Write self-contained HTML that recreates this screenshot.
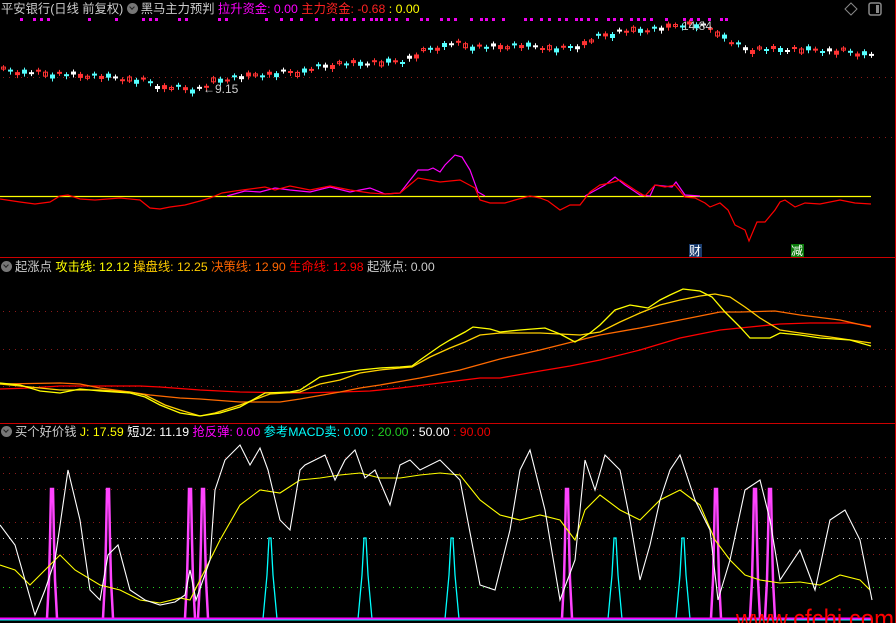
<!DOCTYPE html>
<html><head><meta charset="utf-8"><style>
html,body{margin:0;padding:0;background:#000;width:896px;height:623px;overflow:hidden}
svg{position:absolute;left:0;top:0}
.t{position:absolute;font:12.3px "Liberation Sans","Noto Sans CJK SC",sans-serif;white-space:nowrap;line-height:16px}
.ic{display:inline-block;width:11px;height:11px;border-radius:50%;background:#777;vertical-align:-1px;margin-right:3px;position:relative}
.ic:after{content:"";position:absolute;left:3px;top:2px;width:3px;height:3px;border-right:1.5px solid #222;border-bottom:1.5px solid #222;transform:rotate(45deg)}
</style></head><body>
<svg width="896" height="623" viewBox="0 0 896 623" id="s">
<g stroke="#8b1a1a" stroke-dasharray="1,5" stroke-width="1">
<line x1="3" y1="77.5" x2="893" y2="77.5"/><line x1="3" y1="137.5" x2="893" y2="137.5"/>
<line x1="3" y1="311.5" x2="893" y2="311.5"/><line x1="3" y1="349.5" x2="893" y2="349.5"/><line x1="3" y1="386.5" x2="893" y2="386.5"/>
<line x1="3" y1="457.5" x2="893" y2="457.5"/><line x1="3" y1="473.5" x2="893" y2="473.5"/><line x1="3" y1="489.5" x2="893" y2="489.5"/><line x1="3" y1="522.5" x2="893" y2="522.5"/><line x1="3" y1="554.5" x2="893" y2="554.5"/>
</g>
<line x1="3" y1="538.5" x2="893" y2="538.5" stroke="#ccc" stroke-dasharray="1,5"/>
<line x1="3" y1="587.5" x2="893" y2="587.5" stroke="#2c2" stroke-dasharray="1,5"/>
<line x1="0" y1="257.5" x2="896" y2="257.5" stroke="#c00"/>
<line x1="0" y1="423.5" x2="896" y2="423.5" stroke="#c00"/>
<line x1="895.5" y1="0" x2="895.5" y2="623" stroke="#c00"/>
<g id="dots" fill="#e0e"></g>
<g id="cand"></g>
<line x1="0" y1="196.5" x2="871" y2="196.5" stroke="#ff0" stroke-width="1.3"/>
<polyline fill="none" stroke="#f0f" stroke-width="1.2" points="227,196 245,191 260,192 275,188 290,190 310,192 330,187 350,192 370,188 385,194 400,193 418,170 428,170 433,168 440,172 445,165 455,155 462,157 470,170 478,192 485,196"/>
<polyline fill="none" stroke="#f0f" stroke-width="1.2" points="585,196 605,185 615,177 625,185 640,195 650,196 655,185 672,187 676,182 685,195 700,196"/>
<polyline fill="none" stroke="#f00" stroke-width="1.2" points="0,199 20,202 35,204 50,202 60,196 68,195 80,199 95,200 120,198 140,200 150,208 160,209 170,207 185,205 200,201 210,198 222,193 235,191 250,189 265,187 275,190 290,186 310,190 330,186 350,190 370,193 385,194 400,193 418,178 440,182 460,180 475,188 480,200 490,203 505,203 515,200 530,196 540,198 548,201 560,210 570,205 580,205 590,192 600,185 610,183 620,180 635,190 645,196 655,185 665,187 675,185 685,197 695,198 705,203 710,207 720,203 728,210 735,225 745,230 749,241 757,222 765,222 775,210 780,202 785,200 795,207 805,203 820,204 840,200 855,203 871,204"/>
<rect x="689" y="244" width="13" height="13" fill="#1a3c6e"/><text x="689" y="255" fill="#fff" font-size="12" font-family="Noto Sans CJK SC,sans-serif">财</text>
<rect x="791" y="244" width="13" height="13" fill="#0a7a0a"/><text x="791" y="255" fill="#fff" font-size="12" font-family="Noto Sans CJK SC,sans-serif">减</text>
<g fill="none" stroke-width="1.3">
<polyline stroke="#f00" points="0,389 30,388 60,386 100,386 140,386 160,387 200,390 240,392 300,393 340,392 370,391 400,388 440,383 480,378 500,378 540,371 570,366 600,360 640,350 680,338 720,330 750,327 780,324 810,323 850,323 871,326"/>
<polyline stroke="#ff6a00" points="0,384 60,383 80,384 100,388 130,392 150,395 180,398 200,399 240,402 280,402 300,399 340,392 360,388 380,385 420,378 460,370 500,359 540,350 580,340 600,335 640,328 680,320 710,314 720,312 740,312 775,311 800,315 840,320 871,327"/>
<polyline stroke="#ffd000" points="0,384 30,387 60,390 100,390 130,392 145,395 165,405 180,410 200,416 215,413 240,405 270,394 300,392 320,384 340,380 360,373 380,370 400,368 412,367 430,357 450,348 465,342 480,335 500,333 540,333 580,335 600,332 620,322 640,313 660,305 680,300 700,296 715,294 730,297 745,307 760,318 780,330 800,333 830,337 871,343"/>
<polyline stroke="#ff0" points="0,383 20,385 40,391 60,393 80,389 100,391 130,393 145,397 160,405 180,413 200,416 220,413 240,407 265,393 290,392 300,390 320,377 340,373 360,370 380,368 400,367 412,366 420,360 440,346 450,340 465,332 473,327 490,329 500,332 520,330 545,328 560,334 575,342 590,333 600,325 615,310 630,305 648,308 660,300 670,295 683,289 700,291 712,297 725,312 740,327 750,338 770,338 780,333 800,335 820,338 850,340 871,346"/>
</g>
<g id="spk"></g>
<polyline fill="none" stroke="#ff0" stroke-width="1.1" points="0,565 15,570 30,585 45,570 60,555 75,570 100,585 120,590 140,600 160,603 180,598 190,600 200,580 220,540 240,505 260,490 280,493 300,480 320,478 340,475 360,473 380,478 400,478 420,475 440,473 460,475 480,500 500,515 520,520 540,515 560,520 575,540 585,510 600,495 620,510 640,520 660,500 680,490 700,505 715,540 730,560 745,575 760,580 780,583 800,582 820,585 840,575 860,580 870,590"/>
<polyline fill="none" stroke="#fff" stroke-width="1.1" points="0,525 15,545 35,615 45,590 55,560 68,470 80,520 90,590 100,600 108,555 118,545 130,590 145,600 160,605 175,602 185,595 190,570 196,600 210,560 215,490 225,460 240,445 250,465 260,448 268,470 280,520 290,530 300,470 305,465 315,460 325,455 335,480 345,460 355,450 365,478 375,470 390,505 400,465 410,460 420,470 440,460 460,480 480,585 495,590 510,530 520,470 530,450 545,510 560,600 575,560 585,460 595,490 605,455 620,470 630,520 640,580 650,545 660,500 670,470 680,455 695,500 710,530 718,600 730,560 745,490 760,480 770,520 780,580 800,550 815,590 830,520 845,510 860,540 872,600"/>
<line x1="0" y1="618.5" x2="871" y2="618.5" stroke="#f0f" stroke-width="2"/>
<text x="203" y="93" fill="#ccc" font-size="12" font-family="Liberation Sans,sans-serif">←9.15</text>
<text x="682" y="30" fill="#ccc" font-size="12" font-family="Liberation Sans,sans-serif">14.84</text>
<text x="736" y="628" fill="#f00" font-size="27" textLength="158" lengthAdjust="spacingAndGlyphs" font-family="Liberation Sans,sans-serif">www.cfchi.com</text>
<path d="M851 3 l6 6 -6 6 -6 -6z" fill="none" stroke="#888"/>
<rect x="869" y="3" width="12" height="12" rx="2" fill="none" stroke="#888" stroke-width="1.5"/><rect x="876" y="5" width="3" height="8" fill="#888"/>
</svg>
<div class="t" style="left:1px;top:1px;color:#ccc">平安银行(日线 前复权) <span class="ic"></span>黑马主力预判 <span style="color:#f0f">拉升资金: 0.00</span> <span style="color:#f22">主力资金: -0.68</span> <span style="color:#ff0">: 0.00</span></div>
<div class="t" style="left:1px;top:259px;color:#ccc"><span class="ic"></span>起涨点 <span style="color:#ff0">攻击线: 12.12</span> <span style="color:#fc0">操盘线: 12.25</span> <span style="color:#f60">决策线: 12.90</span> <span style="color:#f00">生命线: 12.98</span> 起涨点: 0.00</div>
<div class="t" style="left:1px;top:424px;color:#ccc"><span class="ic"></span>买个好价钱 <span style="color:#ff0">J: 17.59</span> <span style="color:#fff">短J2: 11.19</span> <span style="color:#f0f">抢反弹: 0.00</span> <span style="color:#0ff">参考MACD卖: 0.00</span> <span style="color:#2c2">: 20.00</span> <span style="color:#fff">: 50.00</span> <span style="color:#e00">: 90.00</span></div>
<script>
var NS="http://www.w3.org/2000/svg";
function el(p,t,a){var e=document.createElementNS(NS,t);for(var k in a)e.setAttribute(k,a[k]);p.appendChild(e);return e;}
var dx=[20,33,40,47,88,115,142,149,155,178,185,218,225,265,280,290,300,315,332,340,345,353,362,370,375,380,388,395,406,420,426,440,447,454,470,480,485,492,502,524,530,540,548,558,565,575,580,587,595,607,613,620,630,637,643,650,665,683,690,697,708,720,725];
var g=document.getElementById("dots");dx.forEach(function(x){el(g,"rect",{x:x,y:18,width:3,height:3});});
var P=[[0,69],[40,72],[100,75],[145,80],[160,86],[200,88],[210,80],[240,75],[300,70],[330,63],[400,60],[415,53],[430,47],[450,42],[480,46],[520,44],[560,48],[580,43],[600,34],[620,30],[650,28],[690,22],[715,30],[730,42],[745,48],[800,48],[840,50],[870,53]];
function py(x){for(var i=1;i<P.length;i++)if(x<=P[i][0]){var a=P[i-1],b=P[i];return a[1]+(b[1]-a[1])*(x-a[0])/(b[0]-a[0]);}return 53;}
var c=document.getElementById("cand"),cols=["#f33","#5ff","#f33","#5ff","#fff","#f33"];
for(var i=0;i<125;i++){var x=i*7+1,y=py(x)+((i*37)%5-2),col=cols[(i*7)%6],h=2+(i*13)%4;
el(c,"line",{x1:x+2.5,y1:y-2,x2:x+2.5,y2:y+h+2,stroke:col});
if(col=="#f33"&&i%3==0)el(c,"rect",{x:x+.5,y:y,width:4,height:h,fill:"none",stroke:col});else el(c,"rect",{x:x,y:y,width:5,height:Math.max(2,h-1),fill:col});}
var s=document.getElementById("spk");
[52,108,190,203,567,716,755,770].forEach(function(x){el(s,"polyline",{points:(x-5)+",618 "+(x-3)+",580 "+(x-2)+",540 "+(x-1)+",489 "+(x+1)+",489 "+(x+2)+",540 "+(x+3)+",580 "+(x+5)+",618",fill:"none",stroke:"#f4f","stroke-width":2.5});});
[270,365,452,615,683].forEach(function(x){el(s,"polyline",{points:(x-7)+",619 "+(x-3)+",575 "+(x-1)+",538 "+(x+1)+",538 "+(x+3)+",575 "+(x+7)+",619",fill:"none",stroke:"#0ff","stroke-width":1.3});});
el(s,"line",{x1:0,y1:620,x2:871,y2:620,stroke:"#0ff"});
</script>
</body></html>
